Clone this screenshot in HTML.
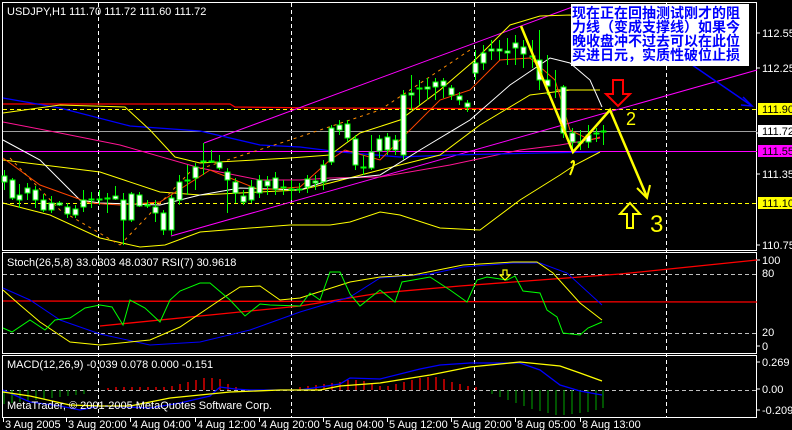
<!DOCTYPE html>
<html><head><meta charset="utf-8"><style>
html,body{margin:0;padding:0;background:#000;width:792px;height:430px;overflow:hidden}
svg{display:block}
text{font-family:"Liberation Sans",sans-serif;font-size:11px;fill:#fff}
.cn{font-family:"Liberation Sans","Noto Sans CJK SC",sans-serif;font-size:14px;font-weight:bold;fill:#0000ff}
</style></head><body>
<svg width="792" height="430" viewBox="0 0 792 430" xmlns="http://www.w3.org/2000/svg">
<rect width="792" height="430" fill="#000"/>
<g fill="none" stroke="#fff" stroke-width="1">
<rect x="2.5" y="2.5" width="754" height="248"/>
<rect x="2.5" y="252.5" width="754" height="101"/>
<rect x="2.5" y="355.5" width="754" height="62"/>
</g>
<g stroke="#fff" stroke-dasharray="4,3" stroke-width="1">
<line x1="98.5" y1="3" x2="98.5" y2="417"/>
<line x1="291.5" y1="3" x2="291.5" y2="417"/>
<line x1="474.5" y1="3" x2="474.5" y2="417"/>
<line x1="666.5" y1="3" x2="666.5" y2="417"/>
</g>
<line x1="3" y1="109.5" x2="757" y2="109.5" stroke="#ff0" stroke-dasharray="4,3"/>
<line x1="3" y1="203.5" x2="757" y2="203.5" stroke="#ff0" stroke-dasharray="4,3"/>
<line x1="3" y1="131.5" x2="757" y2="131.5" stroke="#a0a0a0"/>
<line x1="3" y1="151.5" x2="757" y2="151.5" stroke="#f0f"/>
<polyline fill="none" stroke="#f00" stroke-width="1.3" points="3,104 230,104 235,107 320,108 600,109"/>
<line x1="204" y1="143" x2="575" y2="6" stroke="#f0f"/>
<line x1="171" y1="236" x2="757" y2="70" stroke="#f0f"/>
<polyline fill="none" stroke="#ff1493" points="3,122 60,133 120,145 200,168 260,180 300,180 330,178 380,177 450,165 520,150 560,145 600,138"/>
<polyline fill="none" stroke="#0000ff" stroke-width="1.3" points="3,98 60,108 130,126 200,131 260,145 300,147 340,152 400,157 450,155 540,153 600,152"/>
<polyline fill="none" stroke="#ff0" points="3,113 60,105 125,107 150,130 175,157 200,163 290,158 330,155 360,133 400,120 440,90 475,60 510,25 540,16 570,15 600,22"/>
<polyline fill="none" stroke="#ff0" points="3,203 50,215 100,238 140,247 165,245 200,232 250,228 290,225 330,225 350,222 380,212 400,215 440,228 480,230 520,200 560,175 575,165 600,152"/>
<polyline fill="none" stroke="#ff0" points="3,160 100,172 160,192 200,195 300,190 330,183 380,170 440,155 480,125 530,95 570,90 600,90"/>
<polyline fill="none" stroke="#ff0" points="555,90 600,90"/>
<polyline fill="none" stroke="#fff" points="3,140 40,160 80,200 100,203 160,205 200,195 240,188 300,190 330,180 380,175 420,150 470,120 510,85 550,58 570,63 590,80 602,107"/>
<polyline fill="none" stroke="#ff4500" points="3,158 40,185 90,203 120,205 160,202 210,170 235,180 260,190 300,187 330,160 345,150 380,160 410,130 440,100 470,90 500,60 530,58 555,80 570,130 590,140 600,137"/>
<polyline fill="none" stroke="#ff8c00" stroke-dasharray="3,4" points="120,245 190,172 290,140 380,110 440,70 470,50"/>
<polyline fill="none" stroke="#ff8c00" stroke-dasharray="3,4" points="10,158 60,210 120,245"/>
<g stroke="#0f0" stroke-width="1">
<path d="M4.5,170V190M12.5,178V200M19.5,184V208M27.5,183V200M35.5,186V208M43.5,194V212M51.5,196V213M59.5,201V206M67.5,203V218M75.5,205V218M83.5,190V212M91.5,192V208M99.5,190V205M107.5,193V213M115.5,186V200M123.5,193V245M131.5,192V222M139.5,192V207M147.5,200V208M155.5,200V222M163.5,210V235M171.5,195V235M179.5,175V205M187.5,165V195M195.5,163V190M203.5,143V175M211.5,150V163M219.5,155V170M227.5,168V213M235.5,178V203M243.5,190V205M251.5,180V203M259.5,175V198M267.5,176V195M275.5,172V195M283.5,180V195M291.5,180V200M299.5,183V193M307.5,175V193M315.5,175V190M323.5,160V190M331.5,125V165M339.5,120V135M347.5,120V142M355.5,135V170M363.5,155V175M371.5,135V170M379.5,135V158M387.5,133V155M395.5,135V155M403.5,90V160M411.5,75V110M419.5,80V105M427.5,78V100M435.5,78V100M443.5,78V98M451.5,85V100M459.5,92V105M467.5,100V112M475.5,50V80M483.5,45V70M491.5,40V60M499.5,40V60M507.5,38V65M515.5,35V65M523.5,40V68M532.5,40V68M539.5,30V90M547.5,55V95M555.5,70V98M563.5,85V138M572.5,128V150M580.5,130V150M588.5,125V148M596.5,128V142M603.5,125V145"/>
</g>
<g fill="#fff" stroke="#0f0" stroke-width="1">
<rect x="2" y="176" width="5" height="6"/><rect x="10" y="180" width="5" height="18"/><rect x="17" y="195" width="5" height="5"/><rect x="25" y="188" width="5" height="5"/><rect x="33" y="190" width="5" height="10"/><rect x="41" y="200" width="5" height="10"/><rect x="49" y="203" width="5" height="7"/><rect x="57" y="203" width="5" height="2"/><rect x="65" y="207" width="5" height="7"/><rect x="73" y="209" width="5" height="6"/><rect x="81" y="200" width="5" height="7"/><rect x="89" y="199" width="5" height="1"/><rect x="97" y="199" width="5" height="1"/><rect x="105" y="198" width="5" height="1"/><rect x="113" y="196" width="5" height="3"/><rect x="121" y="200" width="5" height="20"/><rect x="129" y="194" width="5" height="26"/><rect x="137" y="195" width="5" height="11"/><rect x="145" y="205" width="5" height="1"/><rect x="153" y="207" width="5" height="6"/><rect x="161" y="213" width="5" height="17"/><rect x="169" y="198" width="5" height="32"/><rect x="177" y="182" width="5" height="18"/><rect x="185" y="180" width="5" height="1"/><rect x="193" y="167" width="5" height="11"/><rect x="201" y="161" width="5" height="1"/><rect x="209" y="161" width="5" height="1"/><rect x="217" y="162" width="5" height="6"/><rect x="225" y="172" width="5" height="8"/><rect x="233" y="182" width="5" height="11"/><rect x="241" y="196" width="5" height="6"/><rect x="249" y="187" width="5" height="13"/><rect x="257" y="180" width="5" height="13"/><rect x="265" y="181" width="5" height="5"/><rect x="273" y="178" width="5" height="11"/><rect x="281" y="187" width="5" height="1"/><rect x="289" y="189" width="5" height="1"/><rect x="297" y="189" width="5" height="1"/><rect x="305" y="179" width="5" height="8"/><rect x="313" y="181" width="5" height="2"/><rect x="321" y="165" width="5" height="17"/><rect x="329" y="128" width="5" height="34"/><rect x="337" y="125" width="5" height="5"/><rect x="345" y="124" width="5" height="14"/><rect x="353" y="139" width="5" height="26"/><rect x="361" y="167" width="5" height="1"/><rect x="369" y="152" width="5" height="16"/><rect x="377" y="139" width="5" height="12"/><rect x="385" y="137" width="5" height="13"/><rect x="393" y="140" width="5" height="10"/><rect x="401" y="95" width="5" height="60"/><rect x="409" y="93" width="5" height="2"/><rect x="417" y="88" width="5" height="1"/><rect x="425" y="87" width="5" height="2"/><rect x="433" y="82" width="5" height="5"/><rect x="441" y="81" width="5" height="5"/><rect x="449" y="88" width="5" height="7"/><rect x="457" y="96" width="5" height="4"/><rect x="465" y="103" width="5" height="4"/><rect x="473" y="63" width="5" height="10"/><rect x="481" y="53" width="5" height="10"/><rect x="489" y="49" width="5" height="2"/><rect x="497" y="49" width="5" height="2"/><rect x="505" y="51" width="5" height="2"/><rect x="513" y="43" width="5" height="5"/><rect x="521" y="47" width="5" height="7"/><rect x="530" y="56" width="5" height="1"/><rect x="537" y="60" width="5" height="20"/><rect x="545" y="80" width="5" height="6"/><rect x="561" y="87" width="5" height="46"/><rect x="570" y="133" width="5" height="9"/><rect x="578" y="142" width="5" height="1"/><rect x="586" y="135" width="5" height="7"/><rect x="594" y="133" width="5" height="1"/><rect x="601" y="131" width="5" height="1"/>
</g>
<polyline fill="none" stroke="#ff0" stroke-width="2.5" points="521,26 573,152 610,110 647,197"/>
<polyline fill="none" stroke="#ff0" stroke-width="2" points="637,188 647,198 650,185"/>
<path d="M571,163 q3,-4 3,0 q-1,5 -4,12" fill="none" stroke="#ff0" stroke-width="2"/>
<text x="626" y="125" style="font-size:18px;fill:#ff0">2</text>
<text x="650" y="232" style="font-size:24px;fill:#ff0">3</text>
<path d="M613,80h10v14h7l-12,12l-12,-12h7z" fill="none" stroke="#f00" stroke-width="2"/>
<path d="M627,228v-14h-7l10,-11l10,11h-7v14z" fill="none" stroke="#ff0" stroke-width="2"/>
<line x1="682" y1="58" x2="752" y2="106" stroke="#0000ff" stroke-width="1.5"/>
<polyline fill="none" stroke="#0000ff" stroke-width="1.5" points="743,97 752,106 741,105"/>
<rect x="571" y="4" width="178" height="62" fill="#fff"/>
<text class="cn" x="572" y="18">现在正在回抽测试刚才的阻</text>
<text class="cn" x="572" y="32">力线（变成支撑线）如果今</text>
<text class="cn" x="572" y="46">晚收盘冲不过去可以在此位</text>
<text class="cn" x="572" y="60">买进日元，实质性破位止损</text>
<text x="7" y="15">USDJPY,H1  111.70 111.72 111.60 111.72</text>
<g fill="#fff" font-size="11">
<text x="762" y="37">112.55</text>
<text x="762" y="72">112.25</text>
<text x="762" y="137" >111.65</text>
<text x="762" y="178">111.35</text>
<text x="762" y="249">110.75</text>
<text x="762" y="264">100</text>
<text x="762" y="277">80</text>
<text x="762" y="336">20</text>
<text x="762" y="350">0</text>
<text x="762" y="366">0.269</text>
<text x="762" y="393">0.00</text>
<text x="762" y="414">-0.209</text>
</g>
<g stroke="#fff"><path d="M757,33h3M757,68h3M757,133h3M757,174h3M757,245h3M757,260h3M757,346h3M757,362h3M757,389h3M757,410h3"/></g>
<rect x="758" y="103" width="34" height="12" fill="#ff0"/><text x="762" y="113" style="fill:#000">111.90</text>
<rect x="758" y="125" width="34" height="12" fill="#fff"/><text x="762" y="135" style="fill:#000">111.72</text>
<rect x="758" y="145" width="34" height="12" fill="#f0f"/><text x="762" y="155" style="fill:#000">111.55</text>
<rect x="758" y="197" width="34" height="12" fill="#ff0"/><text x="762" y="207" style="fill:#000">111.10</text>
<line x1="3" y1="274.5" x2="757" y2="274.5" stroke="#c0c0c0" stroke-dasharray="4,3"/>
<line x1="3" y1="333.5" x2="757" y2="333.5" stroke="#c0c0c0" stroke-dasharray="4,3"/>
<line x1="3" y1="301" x2="757" y2="302" stroke="#f00" stroke-width="1.3"/>
<polyline fill="none" stroke="#f00" stroke-width="1.3" points="100,326 200,316 300,306 380,293 460,286 540,280 620,274 757,260"/>
<polyline fill="none" stroke="#0000ff" points="3,288 30,300 60,320 100,334 150,345 200,342 250,330 300,312 350,297 380,278 430,274 463,267 513,263 540,263 567,273 602,305"/>
<polyline fill="none" stroke="#ff0" points="3,290 20,305 40,322 70,342 100,345 150,340 180,327 220,300 240,287 260,286 280,300 300,298 350,282 380,277 413,275 463,265 513,262 537,262 553,273 580,303 602,320"/>
<polyline fill="none" stroke="#0f0" points="3,328 12,332 30,320 45,330 55,320 70,318 85,308 100,305 112,307 123,325 130,300 145,308 160,322 170,300 180,291 200,283 210,283 230,300 245,316 260,304 270,305 300,306 310,293 320,300 330,272 340,272 350,294 360,306 380,290 395,302 402,282 430,277 450,290 467,302 477,280 487,277 507,280 515,276 523,291 540,293 547,310 557,317 563,333 580,335 588,328 602,322"/>
<path d="M503,270h4v5h3l-5,5l-5,-5h3z" fill="none" stroke="#ff0" stroke-width="1.2"/>
<text x="7" y="266">Stoch(26,5,8) 33.0303  48.0307  RSI(7) 30.9618</text>
<line x1="3" y1="390.5" x2="757" y2="390.5" stroke="#c0c0c0" stroke-dasharray="4,3"/>
<g stroke="#008000" stroke-width="1.3"><path d="M4,390v14M12,390v13M20,390v12M28,390v11M36,390v10M44,390v9M52,390v8M60,390v7M68,390v6M76,390v5M84,390v4M492,390v4M500,390v7M508,390v10M516,390v13M524,390v16M532,390v19M540,390v21M548,390v23M556,390v25M564,390v25M572,390v24M580,390v23M588,390v22M596,390v20M603,390v18"/></g>
<g stroke="#f00" stroke-width="1.3"><path d="M108,390v-2M116,390v-3M124,390v-3M132,390v-3M140,390v-3M148,390v-3M156,390v-3M164,390v-3M172,390v-4M180,390v-6M188,390v-8M196,390v-10M204,390v-12M212,390v-12M220,390v-11M228,390v-6M236,390v-3M300,390v-3M308,390v-4M316,390v-5M324,390v-6M332,390v-7M340,390v-8M348,390v-10M356,390v-10M364,390v-9M372,390v-6M380,390v-4M388,390v-4M396,390v-6M404,390v-8M412,390v-10M420,390v-12M428,390v-13M436,390v-13M444,390v-11M452,390v-8M460,390v-6M468,390v-4M476,390v-3"/></g>
<polyline fill="none" stroke="#0000ff" stroke-width="1.3" points="3,390 30,402 60,406 80,410 100,406 150,408 180,403 210,396 220,387 235,389 250,390 300,390 340,384 350,378 380,379 420,369 440,365 470,363 520,363 540,370 560,385 580,391 602,395"/>
<polyline fill="none" stroke="#ff0" stroke-width="1.3" points="3,392 30,396 70,405 100,406 130,406 170,398 230,392 280,390 320,390 340,386 380,383 430,375 470,367 520,362 560,366 580,373 602,381"/>
<text x="7" y="368">MACD(12,26,9) -0.039 0.078 0.000 -0.151</text>
<text x="7" y="409">MetaTrader, © 2001-2005 MetaQuotes Software Corp.</text>
<g stroke="#fff"><path d="M3.5,418v4M66.5,418v4M130.5,418v4M195.5,418v4M259.5,418v4M323.5,418v4M387.5,418v4M451.5,418v4M515.5,418v4M580.5,418v4"/></g>
<g font-size="10">
<text x="5" y="428">3 Aug 2005</text>
<text x="68" y="428">3 Aug 20:00</text>
<text x="132" y="428">4 Aug 04:00</text>
<text x="197" y="428">4 Aug 12:00</text>
<text x="261" y="428">4 Aug 20:00</text>
<text x="325" y="428">5 Aug 04:00</text>
<text x="389" y="428">5 Aug 12:00</text>
<text x="453" y="428">5 Aug 20:00</text>
<text x="517" y="428">8 Aug 05:00</text>
<text x="582" y="428">8 Aug 13:00</text>
</g>
</svg>
</body></html>
